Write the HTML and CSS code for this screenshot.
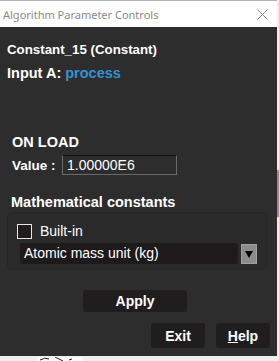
FILE: index.html
```html
<!DOCTYPE html>
<html lang="en">
<head>
    <meta charset="UTF-8">
    <title>Algorithm Parameter Controls</title>
    <link rel="stylesheet" href="styles.css">
</head>
<body>
    <div class="window">
        <div class="titlebar">
            <span class="title">Algorithm Parameter Controls</span>
            <svg class="close" width="11" height="11" viewBox="0 0 11 11">
                <path d="M0.5 0.5 L10.5 10.5 M10.5 0.5 L0.5 10.5" stroke="#8a8a8a" stroke-width="1"/>
            </svg>
        </div>
        <div class="panel">
            <div class="node-name">Constant_15 (Constant)</div>
            <div class="input-line">Input A: <span class="link">process</span></div>

            <div class="section-title onload">ON LOAD</div>
            <div class="value-row">
                <span class="label">Value :</span>
                <div class="text-field">1.00000E6</div>
            </div>

            <div class="section-title math">Mathematical constants</div>
            <div class="group">
                <div class="check-row">
                    <span class="checkbox"></span>
                    <span>Built-in</span>
                </div>
                <div class="combo-row">
                    <div class="combo">Atomic mass unit (kg)</div>
                    <div class="combo-btn">
                        <svg width="8" height="7" viewBox="0 0 8 7"><path d="M0 0 H8 L4 7 Z" fill="#000"/></svg>
                    </div>
                </div>
            </div>

            <div class="apply-row">
                <button class="btn apply">Apply</button>
            </div>
            <div class="footer-row">
                <button class="btn">Exit</button>
                <button class="btn"><u>H</u>elp</button>
            </div>
        </div>
    </div>
    <div class="side-mark"></div>
    <svg class="sketch" width="46" height="4" viewBox="0 0 46 4">
        <rect width="46" height="4" fill="#fafafa"/>
        <path d="M3 3 Q8 0 12 2 M18 0 L26 4 M32 3 L35 2" stroke="#222" stroke-width="1" fill="none"/>
    </svg>
</body>
</html>
```

FILE: styles.css
```css
body {
    margin: 0;
    background: #eeeeee;
    font-family: "Liberation Sans", Arial, sans-serif;
    position: relative;
    width: 279px;
    height: 361px;
    overflow: hidden;
}
.window {
    width: 277px;
}
.titlebar {
    height: 27px;
    background: #ffffff;
    border-top: 1px solid #b4b4b4;
    display: flex;
    align-items: center;
    justify-content: space-between;
    padding: 0 9px 0 3px;
    box-sizing: border-box;
}
.title {
    font-family: "Noto Sans", "Open Sans", sans-serif;
    font-size: 11px;
    color: #8a8a8a;
}
.close {
    margin-top: 1px;
}
.panel {
    height: 329px;
    background: #2d2d2d;
    color: #ffffff;
    font-size: 14px;
    line-height: 15px;
    padding: 15px 7px 0 7px;
    box-sizing: border-box;
}
.node-name,
.input-line,
.section-title {
    font-weight: bold;
}
.node-name {
    font-size: 13.3px;
}
.input-line,
.section-title {
    font-size: 14.5px;
}
.input-line {
    margin-top: 9px;
}
.link {
    color: #3393d3;
}
.section-title.onload {
    margin-top: 54px;
    margin-left: 5px;
}
.value-row {
    display: flex;
    align-items: center;
    margin-top: 5px;
    margin-left: 5px;
}
.label {
    font-size: 13.5px;
    font-weight: bold;
    width: 50px;
}
.text-field {
    width: 115px;
    height: 20px;
    box-sizing: border-box;
    border: 1px solid #6a6a6a;
    border-top-color: #111111;
    padding: 2px 4px;
    line-height: 15px;
}
.section-title.math {
    margin-top: 20px;
    margin-left: 4px;
}
.group {
    margin-top: 2px;
    width: 261px;
    height: 58px;
    box-sizing: border-box;
    background: #2a2a2a;
    border: 1px solid #262626;
    border-radius: 5px;
    padding: 11px 0 0 9px;
}
.check-row {
    display: flex;
    align-items: center;
    gap: 8px;
}
.checkbox {
    width: 15px;
    height: 15px;
    box-sizing: border-box;
    border: 1px solid #e6e6e6;
    background: #1e1c1c;
}
.combo-row {
    display: flex;
    align-items: flex-start;
    gap: 3px;
    margin-top: 4px;
    margin-left: 3px;
}
.combo {
    width: 218px;
    height: 21px;
    background: #1e1a1b;
    border-radius: 2px;
    padding: 3px 4px;
    box-sizing: border-box;
}
.combo-btn {
    width: 16px;
    height: 20px;
    margin-top: 1px;
    background: #8c8c8c;
    border: 1px solid #a0a0a0;
    box-sizing: border-box;
    display: flex;
    align-items: center;
    justify-content: center;
}
.btn {
    background: #1f1d1e;
    color: #ffffff;
    border: none;
    border-radius: 3px;
    font-family: "Liberation Sans", Arial, sans-serif;
    font-size: 14px;
    font-weight: bold;
    padding: 0;
}
.apply-row {
    margin-top: 20px;
    padding-left: 76px;
}
.apply {
    width: 104px;
    height: 22px;
}
.footer-row {
    display: flex;
    justify-content: flex-end;
    gap: 11px;
    margin-top: 11px;
}
.footer-row .btn {
    width: 54px;
    height: 25px;
}
.side-mark {
    position: absolute;
    left: 277px;
    top: 170px;
    width: 2px;
    height: 47px;
    background: #8f8aa6;
}
.sketch {
    position: absolute;
    left: 37px;
    top: 357px;
}
```
